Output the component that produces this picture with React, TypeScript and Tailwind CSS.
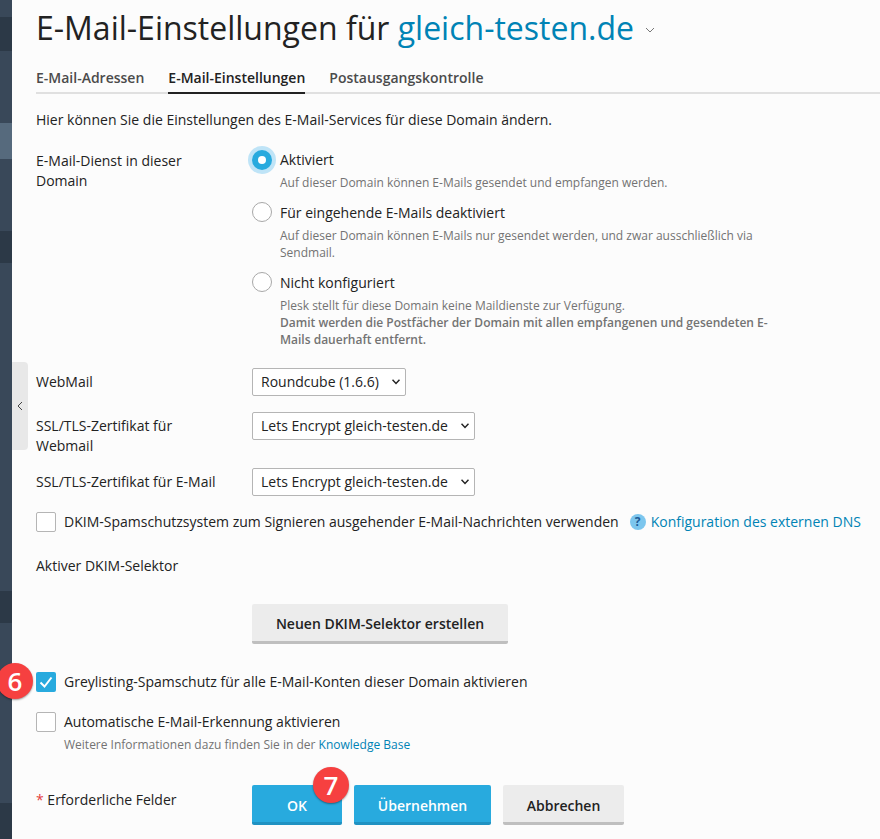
import React from "react";

function Sidebar() {
  return (
    <aside className="w-3 h-[839px] shrink-0 flex flex-col bg-[#394859]">
      <div className="h-[17px] bg-[#394859]" />
      <div className="h-[34px] bg-[#2c3947]" />
      <div className="h-[72px] bg-[#394859]" />
      <div className="h-[36px] bg-[#566a7d]" />
      <div className="h-[72px] bg-[#394859]" />
      <div className="h-[32px] bg-[#2c3947]" />
      <div className="h-[328px] bg-[#394859]" />
      <div className="h-[32px] bg-[#2c3947]" />
      <div className="h-[180px] bg-[#394859]" />
      <div className="h-[36px] bg-[#2c3947]" />
    </aside>
  );
}

function Radio({ checked }: { checked?: boolean }) {
  return checked ? (
    <span className="w-5 h-5 rounded-full bg-[#28aade] shadow-[0_0_0_4px_#bfe4f7] flex items-center justify-center shrink-0">
      <span className="w-2 h-2 rounded-full bg-white" />
    </span>
  ) : (
    <span className="w-5 h-5 rounded-full border border-[#a8a8a8] bg-white shrink-0" />
  );
}

function Check({ checked }: { checked?: boolean }) {
  return checked ? (
    <span className="w-5 h-5 rounded-[2px] bg-[#28aade] flex items-center justify-center shrink-0">
      <svg width="14" height="14" viewBox="0 0 14 14" fill="none">
        <path d="M1.5 7.5 L5.5 11.5 L12.5 2.5" stroke="#fff" strokeWidth="2" />
      </svg>
    </span>
  ) : (
    <span className="w-5 h-5 rounded-[2px] border border-[#b5b5b5] bg-white shrink-0" />
  );
}

function Sel({ w, children }: { w: string; children: string }) {
  return (
    <div className={`relative ${w} h-7`}>
      <select
        defaultValue={children}
        className="w-full h-7 rounded-[2px] border border-[#b5b5b5] bg-white pl-2 text-[14px] text-[#222] appearance-none"
      >
        <option>{children}</option>
      </select>
      <svg className="absolute right-[6px] top-[11px] pointer-events-none" width="8" height="6" viewBox="0 0 8 6" fill="none">
        <path d="M0.5 0.8 L4 4.5 L7.5 0.8" stroke="#222" strokeWidth="1.5" />
      </svg>
    </div>
  );
}

function Badge({ n, cls }: { n: string; cls: string }) {
  return (
    <span
      className={`absolute w-9 h-9 rounded-full bg-[#f64040] text-white text-[26px] font-semibold leading-9 text-center shadow-[0_1px_2px_rgba(0,0,0,0.4)] ${cls}`}
    >
      {n}
    </span>
  );
}

export default function App() {
  return (
    <div className="relative flex w-[880px] h-[839px] overflow-hidden bg-[#fcfcfc] text-[14px] leading-[20px] text-[#222] font-['Open_Sans',sans-serif]">
      <Sidebar />
      <div className="absolute left-3 top-[362px] w-4 h-[88px] bg-[#e8e8e8] rounded-r-[4px] flex items-center justify-center">
        <svg width="8" height="10" viewBox="0 0 8 10" fill="none">
          <path d="M6 1 L2 5 L6 9" stroke="#444" strokeWidth="1" />
        </svg>
      </div>
      <main className="flex-1 pl-6 min-w-0">
        <h1 className="mt-[8px] h-10 text-[32px] leading-10 text-[#222] whitespace-nowrap flex items-center">
          E-Mail-Einstellungen für&nbsp;<span className="text-[#0083b5]">gleich-testen.de</span>
          <svg className="ml-[11px] mt-1" width="10" height="6" viewBox="0 0 10 6" fill="none">
            <path d="M1 1 L5 5 L9 1" stroke="#777" strokeWidth="1" />
          </svg>
        </h1>

        <nav className="mt-[20px] flex gap-6 border-b-2 border-[#e0e0e0] h-[26px] font-semibold text-[#4b4b4b]">
          <span className="h-[26px] leading-[20px]">E-Mail-Adressen</span>
          <span className="h-[26px] leading-[20px] text-[#222] border-b-2 border-[#222]">E-Mail-Einstellungen</span>
          <span className="h-[26px] leading-[20px]">Postausgangskontrolle</span>
        </nav>

        <p className="mt-4">Hier können Sie die Einstellungen des E-Mail-Services für diese Domain ändern.</p>

        <div className="mt-[20px] flex">
          <div className="w-[216px] shrink-0 pr-6 leading-[20px] mt-[1px]">E-Mail-Dienst in dieser Domain</div>
          <div className="flex flex-col">
            <label className="flex items-center gap-2 h-5"><Radio checked /><span>Aktiviert</span></label>
            <p className="ml-7 mt-[4px] text-[12px] leading-[17px] text-[#737373]">Auf dieser Domain können E-Mails gesendet und empfangen werden.</p>
            <label className="flex items-center gap-2 h-5 mt-[11px]"><Radio /><span className="mt-[1px]">Für eingehende E-Mails deaktiviert</span></label>
            <p className="ml-7 mt-[5px] w-[490px] text-[12px] leading-[17px] text-[#737373]">Auf dieser Domain können E-Mails nur gesendet werden, und zwar ausschließlich via Sendmail.</p>
            <label className="flex items-center gap-2 h-5 mt-[11px]"><Radio /><span className="mt-[1px]">Nicht konfiguriert</span></label>
            <p className="ml-7 mt-[5px] w-[490px] text-[12px] leading-[17px] text-[#737373]">
              Plesk stellt für diese Domain keine Maildienste zur Verfügung.<br />
              <b className="font-semibold">Damit werden die Postfächer der Domain mit allen empfangenen und gesendeten E-Mails dauerhaft entfernt.</b>
            </p>
          </div>
        </div>

        <div className="mt-[20px] flex items-start">
          <div className="w-[216px] shrink-0 leading-[20px] mt-1">WebMail</div>
          <Sel w="w-[154px]">Roundcube (1.6.6)</Sel>
        </div>
        <div className="mt-4 flex items-start">
          <div className="w-[216px] shrink-0 pr-6 leading-[20px] mt-1">SSL/TLS-Zertifikat für Webmail</div>
          <Sel w="w-[223px]">Lets Encrypt gleich-testen.de</Sel>
        </div>
        <div className="mt-3 flex items-start">
          <div className="w-[216px] shrink-0 leading-[20px] mt-1 whitespace-nowrap">SSL/TLS-Zertifikat für E-Mail</div>
          <Sel w="w-[223px]">Lets Encrypt gleich-testen.de</Sel>
        </div>

        <div className="mt-[16px] flex items-center gap-2 h-5 whitespace-nowrap">
          <Check />
          <span>DKIM-Spamschutzsystem zum Signieren ausgehender E-Mail-Nachrichten verwenden</span>
          <span className="ml-[3px] w-4 h-4 rounded-full bg-[#7cc6ee] text-[#1c5a96] text-[12px] font-bold leading-4 text-center shrink-0">?</span>
          <a className="-ml-[3px] text-[#0083b5]">Konfiguration des externen DNS</a>
        </div>

        <div className="mt-[24px]">Aktiver DKIM-Selektor</div>

        <div className="mt-[28px] pl-[216px]">
          <button className="w-[256px] h-10 pt-[2px] rounded-[2px] bg-[#ececec] border-b-[3px] border-[#bfbfbf] font-semibold text-[#222]">Neuen DKIM-Selektor erstellen</button>
        </div>

        <div className="mt-[28px] flex items-center gap-2 h-5"><Check checked /><span>Greylisting-Spamschutz für alle E-Mail-Konten dieser Domain aktivieren</span></div>
        <div className="mt-5 flex items-center gap-2 h-5"><Check /><span>Automatische E-Mail-Erkennung aktivieren</span></div>
        <p className="ml-7 mt-[4px] text-[12px] leading-[17px] text-[#737373]">Weitere Informationen dazu finden Sie in der <a className="text-[#0083b5]">Knowledge Base</a></p>

        <div className="mt-[32px] flex items-start">
          <div className="w-[216px] shrink-0 mt-[5px]"><span className="text-[#e53e3e]">*</span> Erforderliche Felder</div>
          <div className="flex gap-3 font-semibold">
            <button className="w-[90px] h-10 pt-1 rounded-[2px] bg-[#28aade] border-b-[3px] border-[#2092c2] text-white">OK</button>
            <button className="w-[137px] h-10 pt-1 rounded-[2px] bg-[#28aade] border-b-[3px] border-[#2092c2] text-white">Übernehmen</button>
            <button className="w-[121px] h-10 pt-1 rounded-[2px] bg-[#ececec] border-b-[3px] border-[#bfbfbf] text-[#222]">Abbrechen</button>
          </div>
        </div>
      </main>
      <Badge n="6" cls="left-[-3px] top-[663px]" />
      <Badge n="7" cls="left-[313px] top-[767px]" />
    </div>
  );
}
